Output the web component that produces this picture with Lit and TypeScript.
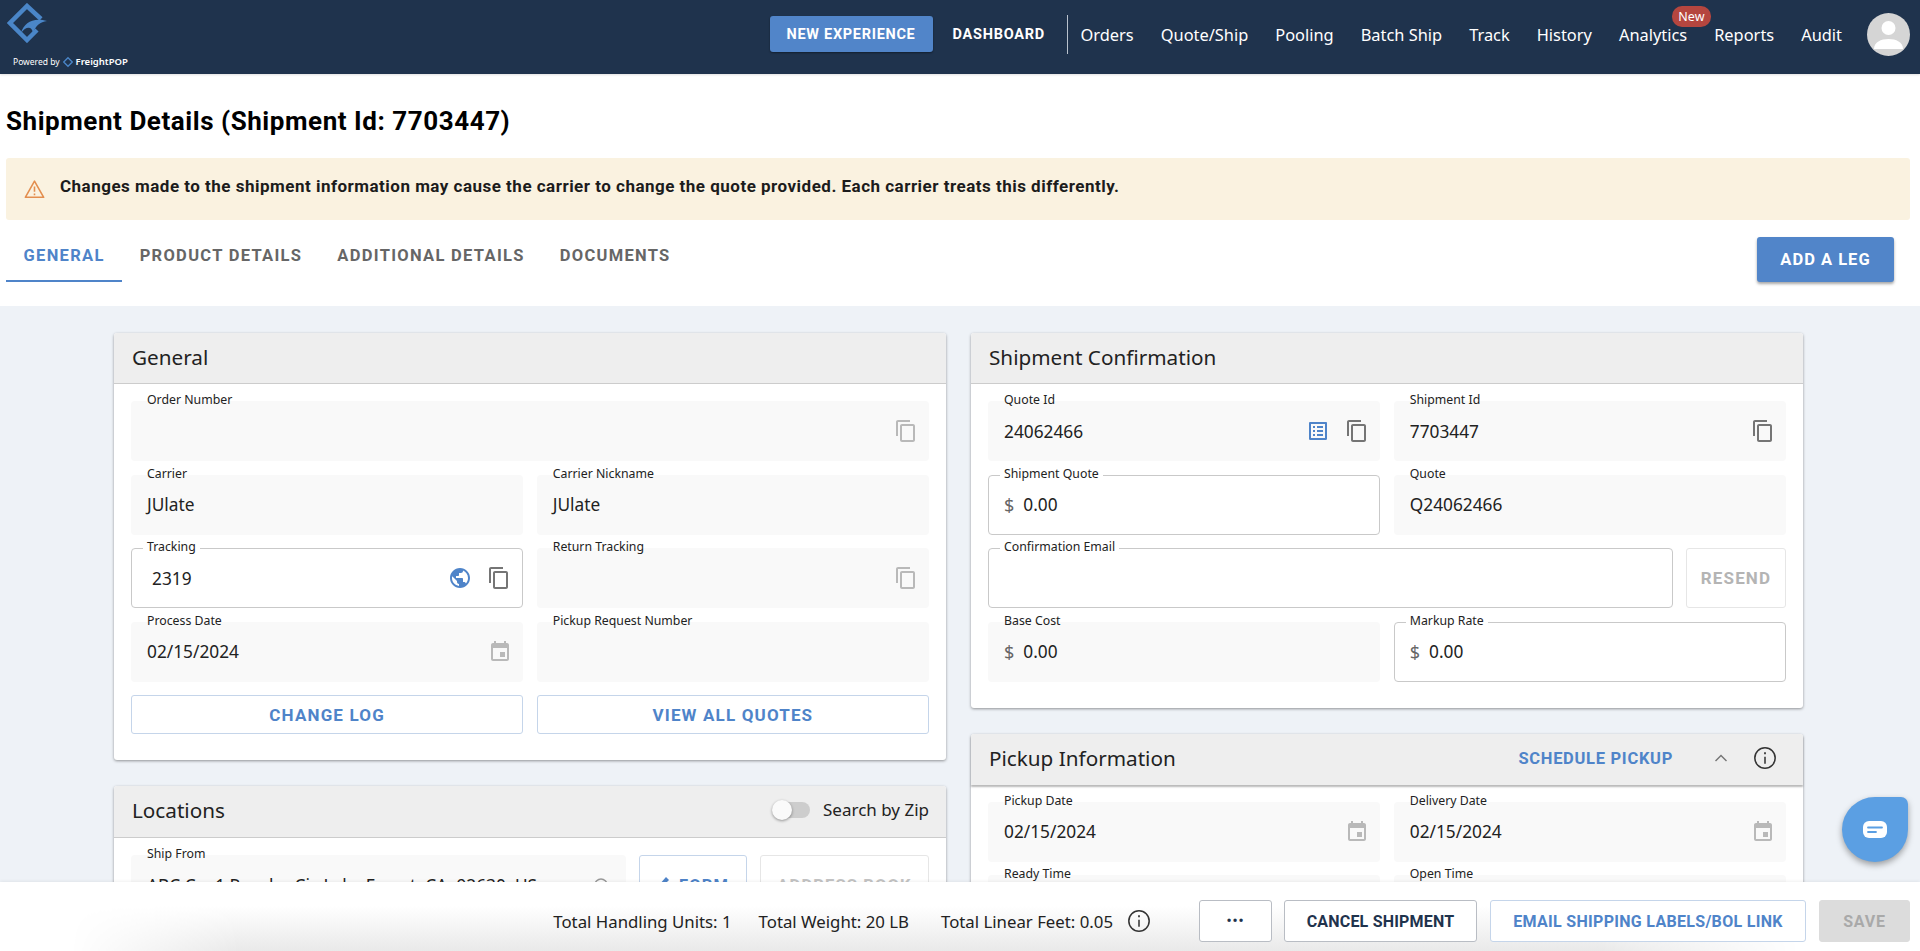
import { LitElement, html, css, svg } from "lit";
import { customElement } from "lit/decorators.js";

const copyIcon = svg`<path d="M16 1H4c-1.1 0-2 .9-2 2v14h2V3h12V1zm3 4H8c-1.1 0-2 .9-2 2v14c0 1.1.9 2 2 2h11c1.1 0 2-.9 2-2V7c0-1.1-.9-2-2-2zm0 16H8V7h11v14z"/>`;
const calIcon = svg`<path d="M17 12h-5v5h5v-5zM16 1v2H8V1H6v2H5c-1.1 0-2 .9-2 2v14c0 1.1.9 2 2 2h14c1.1 0 2-.9 2-2V5c0-1.1-.9-2-2-2h-1V1h-2zm3 18H5V8h14v11z"/>`;
const globeIcon = svg`<path d="M12 2C6.48 2 2 6.48 2 12s4.48 10 10 10 10-4.48 10-10S17.52 2 12 2zm-1 17.93c-3.95-.49-7-3.85-7-7.93 0-.62.08-1.21.21-1.79L9 15v1c0 1.1.9 2 2 2v1.93zm6.9-2.54c-.26-.81-1-1.39-1.9-1.39h-1v-3c0-.55-.45-1-1-1H8v-2h2c.55 0 1-.45 1-1V7h2c1.1 0 2-.9 2-2v-.41c2.93 1.19 5 4.06 5 7.41 0 2.08-.8 3.97-2.1 5.39z"/>`;
const listIcon = svg`<path d="M19 5v14H5V5h14m1.1-2H3.9c-.5 0-.9.4-.9.9v16.2c0 .4.4.9.9.9h16.2c.4 0 .9-.5.9-.9V3.9c0-.5-.5-.9-.9-.9zM11 7h6v2h-6V7zm0 4h6v2h-6v-2zm0 4h6v2h-6v-2zM7 7h2v2H7V7zm0 4h2v2H7v-2zm0 4h2v2H7v-2z"/>`;
const infoIcon = svg`<circle cx="12" cy="12" r="9.4" fill="none" stroke="#333" stroke-width="1.400"/><path d="M11.200 6.800h1.600v1.800h-1.600zM11.300 10.800h1.400v6.400h-1.400z"/>`;
const chevronUp = svg`<path d="M12 8.500l-6 6 1 1 5-5 5 5 1-1z"/>`;

type Ic = { i: unknown; c: string };
const ic = (i: unknown, c: string, s = 24) =>
  html`<svg class="ic ${c}" width=${s} height=${s} viewBox="0 0 24 24">${i}</svg>`;

interface F { label: string; value?: string; outlined?: boolean; prefix?: boolean; icons?: Ic[]; span?: boolean; indent?: boolean; }

const generalFields: F[] = [
  { label: "Order Number", span: true, icons: [{ i: copyIcon, c: "faint" }] },
  { label: "Carrier", value: "JUlate" },
  { label: "Carrier Nickname", value: "JUlate" },
  { label: "Tracking", value: "2319", outlined: true, indent: true, icons: [{ i: globeIcon, c: "blue" }, { i: copyIcon, c: "dark" }] },
  { label: "Return Tracking", icons: [{ i: copyIcon, c: "faint" }] },
  { label: "Process Date", value: "02/15/2024", icons: [{ i: calIcon, c: "faint" }] },
  { label: "Pickup Request Number" },
];

const confirmTop: F[] = [
  { label: "Quote Id", value: "24062466", icons: [{ i: listIcon, c: "blue" }, { i: copyIcon, c: "dark" }] },
  { label: "Shipment Id", value: "7703447", icons: [{ i: copyIcon, c: "dark" }] },
  { label: "Shipment Quote", value: "0.00", prefix: true, outlined: true },
  { label: "Quote", value: "Q24062466" },
];
const confirmBottom: F[] = [
  { label: "Base Cost", value: "0.00", prefix: true },
  { label: "Markup Rate", value: "0.00", prefix: true, outlined: true },
];
const pickupFields: F[] = [
  { label: "Pickup Date", value: "02/15/2024", icons: [{ i: calIcon, c: "faint" }] },
  { label: "Delivery Date", value: "02/15/2024", icons: [{ i: calIcon, c: "faint" }] },
  { label: "Ready Time" },
  { label: "Open Time" },
];
const navLinks = ["Orders", "Quote/Ship", "Pooling", "Batch Ship", "Track", "History", "Analytics", "Reports", "Audit"];

@customElement("app-root")
export class AppRoot extends LitElement {
  static styles = css`
    :host { display: flex; flex-direction: column; height: 951px; overflow: hidden; background: #fff; color: #1c1c1c;
      font-family: "Noto Sans", sans-serif; position: relative; }
    * { box-sizing: border-box; }
    .head { flex: none; height: 74px; background: #1f334d; display: flex; align-items: flex-start; padding-right: 10px; box-shadow: 0 1px 2px rgba(0,0,0,.12); }
    .brand { width: 140px; height: 74px; display: flex; flex-direction: column; padding: 3px 0 0 7px; }
    .powered { display: flex; align-items: center; color: #fff; font-size: 8.5px; gap: 3px; margin: 12px 0 0 6px; white-space: nowrap; }
    .powered b { font-weight: 600; letter-spacing: 0; font-size: 9.5px; }
    .nav { margin-left: auto; display: flex; align-items: center; height: 68px; }
    .newx { width: 163px; height: 36px; border-radius: 3px; background: #5185c9; color: #fff; display: flex; align-items: center; justify-content: center;
      font: 700 14.5px "Roboto", sans-serif; letter-spacing: .7px; box-shadow: 0 1px 2px rgba(0,0,0,.4); }
    .dash { color: #fff; font: 700 14.5px "Roboto", sans-serif; letter-spacing: .75px; margin-left: 20px; width: 115px; height: 39px; border-right: 1px solid #b9c2cd; display: flex; align-items: center; }
    .links { display: flex; gap: 27px; margin-left: 13px; font-size: 16.4px; color: #fff; }
    .link { position: relative; white-space: nowrap; }
    .badge { position: absolute; left: 53px; top: -17px; width: 39px; height: 21px; border-radius: 10px; background: #b5463f; color: #fff; font-size: 12.5px; display: flex; align-items: center; justify-content: center; }
    .avatar { margin-left: 25px; flex: none; }
    .titlebar { flex: none; height: 84px; padding: 32px 0 0 6px; font: 700 26px "Roboto", sans-serif; color: #000; letter-spacing: .55px; line-height: 30px; }
    .alert { flex: none; margin: 0 10px 0 6px; height: 62px; border-radius: 3px; background: #faf2e0; display: flex; align-items: center; padding: 0 0 7px 18px; gap: 15px;
      font: 700 17px "Roboto", sans-serif; color: #1c1c1c; letter-spacing: .49px; }
    .alert svg { position: relative; top: 3px; }
    .tabs { flex: none; height: 86px; display: flex; padding: 17px 26px 0 6px; }
    .tab { height: 45px; display: flex; align-items: center; justify-content: center; padding: 0 17.500px 6px; font: 700 16.5px "Roboto", sans-serif; letter-spacing: 1.3px; color: #666; white-space: nowrap; border-bottom: 2px solid transparent; }
    .tab.on { color: #4f84c9; border-bottom-color: #4f84c9; }
    .addleg { margin-left: auto; width: 137px; height: 45px; border-radius: 3px; background: #5185c9; color: #fff; display: flex; align-items: center; justify-content: center; font: 700 16.5px "Roboto", sans-serif; letter-spacing: 1px; box-shadow: 0 2px 3px rgba(0,0,0,.35); }
    .main { flex: 1; min-height: 0; overflow: hidden; background: #eef2f7; padding: 27px 117px 0 114px; display: grid; grid-template-columns: 832px 832px; column-gap: 25px; align-items: start; }
    .col { display: flex; flex-direction: column; gap: 26px; }
    .card { background: #fff; border-radius: 3px; box-shadow: 0 1px 3px rgba(0,0,0,.4); }
    .cardhead { height: 51px; background: #eee; border-bottom: 1px solid #ccc; border-radius: 3px 3px 0 0; display: flex; align-items: center; padding: 0 17px 2px 18px; font-size: 20.7px; color: #222; }
    .cardhead.raised { box-shadow: 0 2px 2px rgba(0,0,0,.28); position: relative; border-bottom: 0; padding-right: 25px; }
    .cardhead.tall { height: 52px; padding-bottom: 4px; }
    .cardhead .right { margin-left: auto; display: flex; align-items: center; }
    .sched { color: #4f84c9; font: 700 16.5px "Roboto", sans-serif; letter-spacing: .7px; margin-right: 36px; }
    .chev { margin-right: 19px; }
    .body { padding: 17px 17px 26px 17px; display: grid; grid-template-columns: 1fr 1fr; column-gap: 13.500px; row-gap: 13.500px; }
    .field { position: relative; height: 60px; background: #f9f9f9; border-radius: 4px; display: flex; align-items: center; padding: 0 16px; }
    .field.span, .span { grid-column: 1 / -1; }
    .field.out { background: #fff; border: 1px solid #c9c9c9; }
    .lbl { position: absolute; left: 16px; top: -10px; font-size: 12.3px; line-height: 17px; color: #222; white-space: nowrap; padding-right: 5px; background: linear-gradient(#fff 50%, transparent 50%); }
    .field.out .lbl { left: 11px; top: -11px; padding: 0 4px; background: #fff; }
    .val { font-size: 17.3px; color: #222; white-space: nowrap; }
    .val.ind { padding-left: 4px; }
    .cur { color: #666; font-size: 18px; margin-right: 9px; }
    .field.out .cur { margin-left: -1px; }
    .icons { margin-left: auto; display: flex; align-items: center; gap: 15px; margin-right: -5px; }
    .ic { display: block; flex: none; }
    .faint { fill: #b9b9b9; }
    .dark { fill: #757575; }
    .blue { fill: #4f84c9; }
    .black { fill: #333; }
    .btn { height: 39px; background: #fff; border: 1px solid #c5d5ea; border-radius: 3px; display: flex; align-items: center; justify-content: center; color: #4f84c9; font: 700 17px "Roboto", sans-serif; letter-spacing: 1.15px; white-space: nowrap; }
    .emailrow { grid-column: 1 / -1; display: flex; gap: 13.500px; }
    .emailrow .field { flex: 1; }
    .resend { width: 100px; flex: none; height: 60px; color: #b4b4b4; border-color: #e6e6e6; }
    .sw { display: flex; align-items: center; font-size: 17px; }
    .track { width: 34px; height: 16px; border-radius: 8px; background: #cdcdcd; position: relative; margin-right: 13px; }
    .knob { position: absolute; left: -4px; top: -2px; width: 20px; height: 20px; border-radius: 50%; background: #fafafa; box-shadow: 0 1px 3px rgba(0,0,0,.4); }
    .locrow { grid-column: 1 / -1; display: flex; gap: 13px; }
    .locrow .field { flex: 1; align-items: flex-start; padding-top: 19px; }
    .locbtn { width: 108px; height: 60px; flex: none; font-size: 16.5px; gap: 8px; align-items: flex-start; padding-top: 20px; }
    .locbtn.off { width: 169px; color: #c4c4c4; border-color: #e6e6e6; }
    .search { width: 18px; height: 18px; margin: 3px 4px 0 0; }
    .foot { flex: none; height: 69px; position: relative; display: flex; align-items: center; justify-content: flex-end; padding: 9px 10px 0 0; font-size: 16.8px;
      background: #fff; box-shadow: 0 -1px 3px rgba(0,0,0,.06); z-index: 2; }
    .foot::before { content: ""; position: absolute; inset: 0; pointer-events: none; background: linear-gradient(#fff 35%, #e9e9e9 100%);
      -webkit-mask-image: linear-gradient(90deg, transparent 70px, #000 240px, #000 1600px, transparent 1800px); mask-image: linear-gradient(90deg, transparent 70px, #000 240px, #000 1600px, transparent 1800px); }
    .foot > * { position: relative; }
    .stat { margin-right: 27px; white-space: nowrap; color: #222; }
    .stat.wide { margin-right: 32px; }
    .stat.tight { margin-right: 13px; }
    .fbtn { height: 42px; border-radius: 3px; background: #fff; border: 1px solid #b9bdc4; display: flex; align-items: center; justify-content: center; color: #1f334d; font: 700 16px "Roboto", sans-serif; letter-spacing: .2px; white-space: nowrap; margin-left: 12px; }
    .fbtn.dots { width: 73px; margin-left: 47px; font-size: 14px; letter-spacing: 1px; }
    .fbtn.cancel { width: 193px; }
    .fbtn.mail { width: 316px; color: #4f84c9; border-color: #c5d5ea; margin-left: 13px; letter-spacing: .3px; }
    .fbtn.save { width: 91px; background: #dcdcdc; border-color: #dcdcdc; color: #a9a9a9; margin-left: 13px; letter-spacing: .8px; }
    .chat { position: absolute; left: 1842px; top: 797px; width: 66px; height: 65px; background: #5b9fe3; border-radius: 50% 7px 50% 50%; box-shadow: 0 3px 6px rgba(0,0,0,.35); display: flex; align-items: center; justify-content: center; z-index: 1; }
  `;

  field(f: F) {
    return html`<div class="field ${f.span ? "span" : ""} ${f.outlined ? "out" : ""}">
      <span class="lbl">${f.label}</span>
      ${f.prefix ? html`<span class="cur">$</span>` : ""}
      ${f.value ? html`<span class="val ${f.indent ? "ind" : ""}">${f.value}</span>` : ""}
      ${f.icons ? html`<span class="icons">${f.icons.map((x) => ic(x.i, x.c))}</span>` : ""}
    </div>`;
  }

  render() {
    return html`
      <header class="head">
        <div class="brand">
          <svg width="40" height="40" viewBox="0 0 40 40" fill="none" stroke="#4a86c8" stroke-width="4.500">
            <path d="M34 16 20 3 3 20 20 37 30 27"/>
            <path d="M14 30C17 19 27 14 40 18 33 19 29 22 26 30 25 23 19 23 14 30Z" fill="#4a86c8" stroke="none"/>
          </svg>
          <div class="powered">Powered by
            <svg width="10" height="12" viewBox="0 0 40 40" fill="none" stroke="#4a86c8" stroke-width="5"><path d="M20 3 37 20 20 37 3 20Z"/></svg>
            <b>FreightPOP</b></div>
        </div>
        <nav class="nav">
          <div class="newx">NEW EXPERIENCE</div>
          <div class="dash">DASHBOARD</div>
          <div class="links">
            ${navLinks.map((l) => html`<span class="link">${l}${l === "Analytics" ? html`<span class="badge">New</span>` : ""}</span>`)}
          </div>
          <svg class="avatar" width="43" height="43" viewBox="0 0 43 43">
            <circle cx="21.500" cy="21.500" r="21.500" fill="#d5d5d5"/>
            <circle cx="21.500" cy="15" r="7" fill="#fff"/>
            <path d="M7 36c0-7 7-10 14.500-10S36 29 36 36Z" fill="#fff"/>
          </svg>
        </nav>
      </header>
      <div class="titlebar">Shipment Details (Shipment Id: 7703447)</div>
      <div class="alert">
        <svg width="21" height="20" viewBox="0 0 24 22" fill="none" stroke="#e38e4e" stroke-width="1.800"><path d="M12 2 22.500 20.500H1.500Z" stroke-linejoin="round"/><path d="M12 8v6M12 16v2"/></svg>
        <span>Changes made to the shipment information may cause the carrier to change the quote provided. Each carrier treats this differently.</span>
      </div>
      <div class="tabs">
        <div class="tab on">GENERAL</div>
        <div class="tab">PRODUCT DETAILS</div>
        <div class="tab">ADDITIONAL DETAILS</div>
        <div class="tab">DOCUMENTS</div>
        <div class="addleg">ADD A LEG</div>
      </div>
      <main class="main">
        <div class="col">
          <section class="card">
            <div class="cardhead">General</div>
            <div class="body">
              ${generalFields.map((f) => this.field(f))}
              <div class="btn">CHANGE LOG</div>
              <div class="btn">VIEW ALL QUOTES</div>
            </div>
          </section>
          <section class="card">
            <div class="cardhead tall">Locations
              <span class="right sw"><span class="track"><span class="knob"></span></span>Search by Zip</span>
            </div>
            <div class="body">
              <div class="locrow">
                <div class="field"><span class="lbl">Ship From</span><span class="val">ABC Co, 1 Rancho Cir, Lake Forest, CA, 92630, US</span>
                  <span class="icons"><svg class="search" viewBox="0 0 18 18" fill="none" stroke="#999" stroke-width="1.500"><circle cx="8" cy="8" r="6"/><path d="M12.500 12.500 17 17"/></svg></span>
                </div>
                <div class="btn locbtn"><svg width="14" height="14" viewBox="0 0 14 14" fill="#4f84c9"><path d="M9 1 12 4 4 12 1 13 2 9Z"/></svg>FORM</div>
                <div class="btn locbtn off">ADDRESS BOOK</div>
              </div>
            </div>
          </section>
        </div>
        <div class="col">
          <section class="card">
            <div class="cardhead">Shipment Confirmation</div>
            <div class="body">
              ${confirmTop.map((f) => this.field(f))}
              <div class="emailrow">
                <div class="field out"><span class="lbl">Confirmation Email</span></div>
                <div class="btn resend">RESEND</div>
              </div>
              ${confirmBottom.map((f) => this.field(f))}
            </div>
          </section>
          <section class="card">
            <div class="cardhead raised">Pickup Information
              <span class="right">
                <span class="sched">SCHEDULE PICKUP</span>
                <span class="chev">${ic(chevronUp, "dark")}</span>
                ${ic(infoIcon, "black", 26)}
              </span>
            </div>
            <div class="body">${pickupFields.map((f) => this.field(f))}</div>
          </section>
        </div>
      </main>
      <footer class="foot">
        <span class="stat">Total Handling Units: 1</span>
        <span class="stat wide">Total Weight: 20 LB</span>
        <span class="stat tight">Total Linear Feet: 0.05</span>
        ${ic(infoIcon, "black", 26)}
        <div class="fbtn dots">•••</div>
        <div class="fbtn cancel">CANCEL SHIPMENT</div>
        <div class="fbtn mail">EMAIL SHIPPING LABELS/BOL LINK</div>
        <div class="fbtn save">SAVE</div>
      </footer>
      <div class="chat">
        <svg width="24" height="17" viewBox="0 0 24 17"><rect width="24" height="17" rx="6" fill="#fff"/><path d="M5 6.500h14M5 11h8" stroke="#5b9fe3" stroke-width="1.800" stroke-linecap="round"/></svg>
      </div>
    `;
  }
}
